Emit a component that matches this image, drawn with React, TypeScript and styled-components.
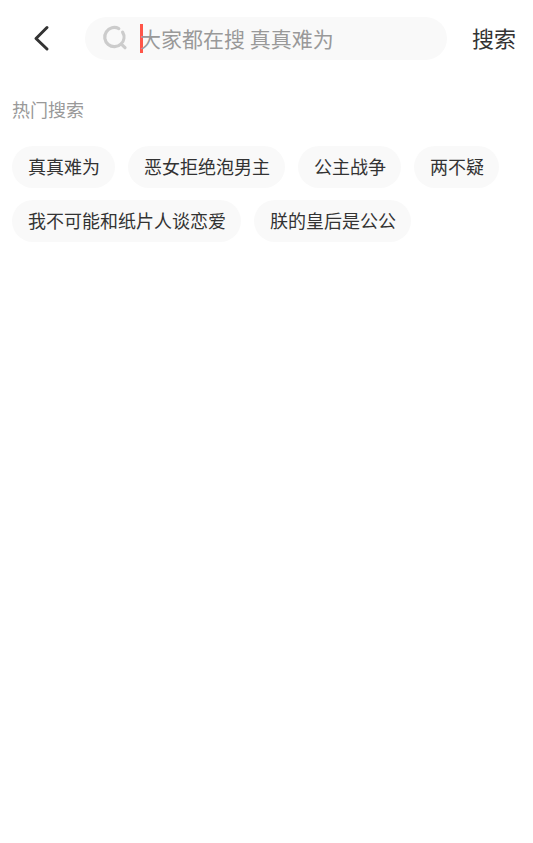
import React, { useState } from "react";
import styled, { createGlobalStyle } from "styled-components";

const GlobalStyle = createGlobalStyle`
  * { box-sizing: border-box; }
  body {
    margin: 0;
    background: #fff;
    color: #333;
    font-family: "Noto Sans CJK SC", sans-serif;
  }
  button, input { font: inherit; color: inherit; }
`;

const Header = styled.header`
  display: flex;
  align-items: center;
  padding: 17px 17px 0 32px;
`;

const PlainButton = styled.button`
  flex: none;
  display: flex;
  padding: 0;
  border: 0;
  background: none;
  cursor: pointer;
`;

const SubmitButton = styled(PlainButton)`
  padding-bottom: 4px;
  font-size: 22px;
  line-height: 32px;
`;

const SearchBox = styled.label`
  flex: 1;
  min-width: 0;
  display: flex;
  align-items: center;
  height: 43px;
  margin: 0 25px 0 33px;
  padding: 0 18px 0 17px;
  border-radius: 22px;
  background: #f9f9f9;
`;

const Caret = styled.span`
  flex: none;
  width: 3px;
  height: 29px;
  margin-left: 12px;
  background: #ff5548;
`;

const SearchInput = styled.input`
  flex: 1;
  min-width: 0;
  height: 34px;
  margin-left: -3px;
  padding: 0 0 2px;
  border: 0;
  outline: 0;
  background: transparent;
  font-size: 21px;
  caret-color: #ff5548;
  &::placeholder { color: #999; opacity: 1; }
`;

const Hot = styled.main`
  padding: 35px 12px 0;
`;

const Title = styled.h2`
  margin: 0 0 23px;
  font-size: 18px;
  font-weight: 400;
  line-height: 28px;
  color: #999;
`;

const Tags = styled.div`
  display: flex;
  flex-wrap: wrap;
  gap: 12px 13px;
`;

const Tag = styled.button`
  height: 42px;
  padding: 0 15px 3px 16px;
  border: 0;
  border-radius: 22px;
  background: #f9f9f9;
  font-size: 18px;
  line-height: 28px;
  cursor: pointer;
`;

const tags = ["真真难为", "恶女拒绝泡男主", "公主战争", "两不疑", "我不可能和纸片人谈恋爱", "朕的皇后是公公"];

export default function App() {
  const [query, setQuery] = useState("");
  return (
    <>
      <GlobalStyle />
      <Header>
        <PlainButton type="button" aria-label="返回">
          <svg width="20" height="29" viewBox="0 0 20 29" fill="none" stroke="#333" strokeWidth="3" strokeLinecap="round" strokeLinejoin="round">
            <path d="M15 3.5 4 14.5 15 25" />
          </svg>
        </PlainButton>
        <SearchBox>
          <svg width="26" height="27" viewBox="0 0 26 27" fill="none" stroke="#ccc" strokeWidth="3.2" strokeLinecap="round">
            <path d="M16.8 3.6A9.6 9.6 0 1 0 19.1 18.9L23 22.7M19.1 18.9A9.6 9.6 0 0 0 20.6 7.1" />
          </svg>
          {query === "" && <Caret />}
          <SearchInput aria-label="搜索" placeholder="大家都在搜 真真难为" value={query} onChange={(e) => setQuery(e.target.value)} />
        </SearchBox>
        <SubmitButton type="button">搜索</SubmitButton>
      </Header>
      <Hot>
        <Title>热门搜索</Title>
        <Tags>
          {tags.map((t) => (
            <Tag type="button" key={t} onClick={() => setQuery(t)}>{t}</Tag>
          ))}
        </Tags>
      </Hot>
    </>
  );
}
